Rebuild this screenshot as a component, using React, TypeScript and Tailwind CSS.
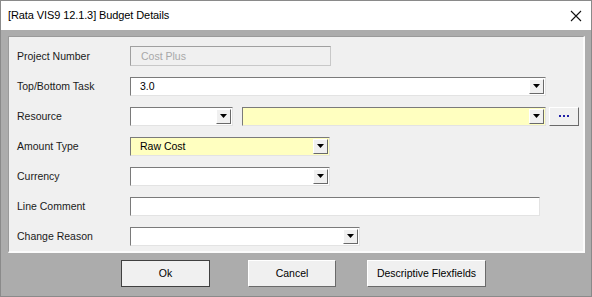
import React from "react";

const Arrow = () => (
  <svg width="7" height="4" viewBox="0 0 7 4"><path d="M0 0h7L3.5 4z" fill="#000" /></svg>
);

const DropBtn = () => (
  <div className="w-[15px] h-full flex items-center justify-center bg-[#f0f0f0] border-t border-l border-t-[#ffffff] border-l-[#ffffff] border-b border-r border-b-[#696969] border-r-[#696969] shrink-0">
    <Arrow />
  </div>
);

const Combo = ({ w, bg = "bg-white", text = "" }: { w: string; bg?: string; text?: string }) => (
  <div className={`${w} h-[19px] flex border-t border-l border-t-[#7a7a7a] border-l-[#7a7a7a] border-b border-r border-b-[#e3e3e3] border-r-[#e3e3e3] ${bg}`}>
    <div className="flex-1 pl-[9px] text-[10.5px] leading-[17px] text-black">{text}</div>
    <div className="py-[1px] pr-[1px]"><DropBtn /></div>
  </div>
);

const Label = ({ children }: { children: React.ReactNode }) => (
  <div className="w-[113px] shrink-0 text-[10.5px] text-[#1a1a1a] whitespace-nowrap pt-[1px]">{children}</div>
);

const Btn = ({ w, children, def = false }: { w: string; children: React.ReactNode; def?: boolean }) => (
  <div className={`${w} h-[27px] flex items-center justify-center text-[10.5px] whitespace-nowrap text-black bg-[#f0f0f0] border ${def ? "border-[#404040]" : "border-t-[#ffffff] border-l-[#ffffff] border-b-[#6a6a6a] border-r-[#6a6a6a]"}`}>
    {children}
  </div>
);

export default function App() {
  return (
    <div className="w-[592px] h-[297px] bg-[#acacac] border border-[#8a8a8a] flex flex-col overflow-hidden" style={{ fontFamily: "'Liberation Sans', Tahoma, sans-serif" }}>
      <div className="h-[29px] bg-white flex items-center justify-between pl-[7px] pr-[7px] shrink-0">
        <span className="text-[11px] tracking-[-0.1px] text-black" style={{ fontFamily: "'Liberation Sans', 'Segoe UI', sans-serif" }}>[Rata VIS9 12.1.3] Budget Details</span>
        <svg width="12" height="12" viewBox="0 0 12 12" className="mr-[2px]"><path d="M1 1L11 11M11 1L1 11" stroke="#111" strokeWidth="1.1" /></svg>
      </div>
      <div className="flex-1 px-[7px] pt-[6px] flex flex-col">
        <div className="h-[217px] bg-[#f0f0f0] border-r-2 border-b-2 border-r-[#fbfbfb] border-b-[#fbfbfb] border-t border-l border-t-[#9a9a9a] border-l-[#9a9a9a] pl-[8px] pt-[9px] flex flex-col gap-[10px] w-[577px]">
          <div className="flex items-center h-[20px]">
            <Label>Project Number</Label>
            <div className="w-[201px] h-[20px] border border-[#c8c8c8] border-t-[#a0a0a0] border-l-[#a0a0a0] bg-[#f0f0f0] text-[10.5px] leading-[18px] pl-[10px] text-[#a8a8a8]">Cost Plus</div>
          </div>
          <div className="flex items-center h-[20px]">
            <Label>Top/Bottom Task</Label>
            <Combo w="w-[416px]" text="3.0" />
          </div>
          <div className="flex items-center h-[20px]">
            <Label>Resource</Label>
            <Combo w="w-[103px]" />
            <div className="w-[9px]" />
            <Combo w="w-[304px]" bg="bg-[#ffffc0]" />
            <div className="w-[3px]" />
            <div className="w-[30px] h-[19px] flex items-center justify-center gap-[2px] bg-[#f0f0f0] border border-t-white border-l-white border-b-[#6a6a6a] border-r-[#6a6a6a]">
              <span className="w-[2px] h-[2px] bg-[#2020a8]" />
              <span className="w-[2px] h-[2px] bg-[#2020a8]" />
              <span className="w-[2px] h-[2px] bg-[#2020a8]" />
            </div>
          </div>
          <div className="flex items-center h-[20px]">
            <Label>Amount Type</Label>
            <Combo w="w-[200px]" bg="bg-[#ffffc0]" text="Raw Cost" />
          </div>
          <div className="flex items-center h-[20px]">
            <Label>Currency</Label>
            <Combo w="w-[200px]" />
          </div>
          <div className="flex items-center h-[20px]">
            <Label>Line Comment</Label>
            <div className="w-[410px] h-[19px] bg-white border border-t-[#7a7a7a] border-l-[#7a7a7a] border-b-[#e3e3e3] border-r-[#e3e3e3]" />
          </div>
          <div className="flex items-center h-[20px]">
            <Label>Change Reason</Label>
            <Combo w="w-[230px]" />
          </div>
        </div>
        <div className="flex pt-[7px] pl-[113px]">
          <Btn w="w-[89px]" def>Ok</Btn>
          <div className="w-[38px]" />
          <Btn w="w-[88px]">Cancel</Btn>
          <div className="w-[31px]" />
          <Btn w="w-[119px]">Descriptive Flexfields</Btn>
        </div>
      </div>
    </div>
  );
}
